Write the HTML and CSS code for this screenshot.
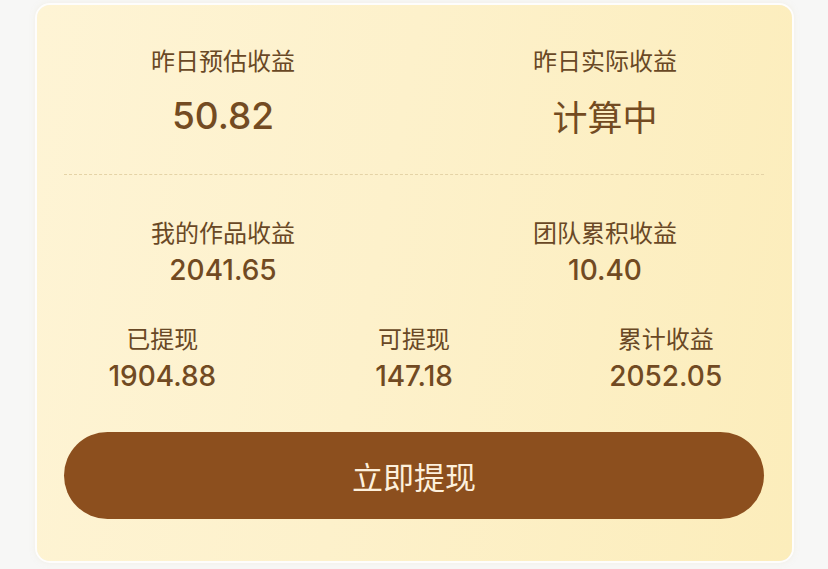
FILE: index.html
```html
<!DOCTYPE html>
<html lang="zh-CN">
<head>
<meta charset="utf-8">
<title>收益</title>
<link rel="stylesheet" href="styles.css">
</head>
<body>
<div class="card">
  <div class="row two top">
    <div class="stat">
      <div class="label">昨日预估收益</div>
      <div class="big num">50.82</div>
    </div>
    <div class="stat">
      <div class="label">昨日实际收益</div>
      <div class="big cjk">计算中</div>
    </div>
  </div>
  <div class="divider"></div>
  <div class="row two mid">
    <div class="stat">
      <div class="label">我的作品收益</div>
      <div class="value">2041.65</div>
    </div>
    <div class="stat">
      <div class="label">团队累积收益</div>
      <div class="value">10.40</div>
    </div>
  </div>
  <div class="row three">
    <div class="stat">
      <div class="label">已提现</div>
      <div class="value">1904.88</div>
    </div>
    <div class="stat">
      <div class="label">可提现</div>
      <div class="value">147.18</div>
    </div>
    <div class="stat">
      <div class="label">累计收益</div>
      <div class="value">2052.05</div>
    </div>
  </div>
  <button class="withdraw">立即提现</button>
</div>
</body>
</html>
```
FILE: styles.css
```css
* { box-sizing: border-box; }
html, body { margin: 0; padding: 0; }
body {
  background: #f7f7f6;
  width: 828px;
  height: 569px;
  overflow: hidden;
  font-family: "Noto Sans CJK SC", "Noto Sans", sans-serif;
}
.card {
  margin: 5px 36px 0 37px;
  height: 556px;
  border-radius: 13px;
  background: linear-gradient(100deg, #fef4d5 0%, #fdf1cb 45%, #fcedbb 100%);
  box-shadow: 0 0 0 2px rgba(255,255,255,0.85), 0 0 6px rgba(230,220,190,0.5);
  padding: 40px 28px 0 27px;
  display: flex;
  flex-direction: column;
}
.row {
  display: flex;
  justify-content: center;
}
.row.two { gap: 182px; }
.row.three { gap: 55px; margin-top: 36px; }
.stat {
  width: 200px;
  display: flex;
  flex-direction: column;
  align-items: center;
}
.label {
  font-size: 24px;
  line-height: 30px;
  color: #694825;
}
.big {
  margin-top: 19px;
  height: 44px;
  line-height: 44px;
  color: #734b22;
}
.big.num {
  font-family: Inter, "Noto Sans", sans-serif;
  font-size: 37px;
  font-weight: 500;
}
.big.cjk {
  font-size: 35px;
  font-weight: 400;
}
.divider {
  margin: 36px 0 0 0;
  border-top: 1px dashed #e5d3a6;
  height: 0;
}
.row.mid { margin-top: 42px; }
.value {
  margin-top: 6px;
  font-family: Inter, "Noto Sans", sans-serif;
  font-size: 28px;
  font-weight: 500;
  line-height: 34px;
  color: #714a22;
}
.withdraw {
  margin-top: 39px;
  height: 87px;
  width: 100%;
  border: none;
  border-radius: 44px;
  background: #8c4f1e;
  color: #fdf0dc;
  font-family: "Noto Sans CJK SC", sans-serif;
  font-size: 31px;
  font-weight: 400;
  padding: 0;
  cursor: pointer;
}
```
